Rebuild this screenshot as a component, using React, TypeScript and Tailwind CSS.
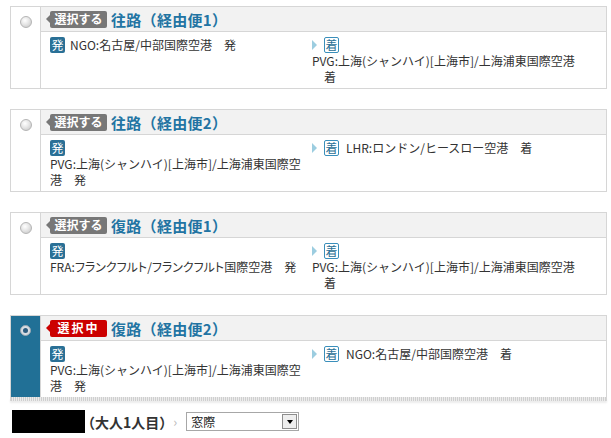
import React from "react";

type Card = {
  dir: string;
  selected?: boolean;
  left: React.ReactNode;
  right: React.ReactNode;
};

function Dep() {
  return (
    <span className="inline-flex items-center justify-center w-[15px] h-[16px] bg-[#2a7096] text-white text-[12px] leading-none rounded-[2px] align-middle">
      発
    </span>
  );
}

function Arr() {
  return (
    <span className="inline-flex items-center justify-center w-[15px] h-[16px] border border-[#3a8fbb] bg-white text-[#2a7096] text-[12px] leading-none rounded-[2px] align-middle">
      着
    </span>
  );
}

function Tri() {
  return (
    <span className="inline-block w-0 h-0 border-y-[5px] border-y-transparent border-l-[5px] border-l-[#9ccde0] align-middle" />
  );
}

function Radio({ on }: { on?: boolean }) {
  if (on) {
    return (
      <span className="flex items-center justify-center w-[11px] h-[11px] rounded-full bg-[#d8dde2] border border-[#9aa7b2]">
        <span className="w-[5px] h-[5px] rounded-full bg-[#2d5d80]" />
      </span>
    );
  }
  return (
    <span className="block w-[12px] h-[12px] rounded-full border border-[#b5b5b5] bg-[radial-gradient(circle_at_40%_35%,#ffffff_0%,#e6e6e6_45%,#c2c2c2_100%)]" />
  );
}

function CardView({ c }: { c: Card }) {
  return (
    <div className="ml-[10px] w-[597px]">
      <div
        className={
          "flex border border-[#d6d6d6] " + (c.selected ? "border-b-0" : "")
        }
      >
        <div
          className={
            "w-[30px] shrink-0 flex justify-center pt-[9px] border-r border-[#d6d6d6] " +
            (c.selected ? "bg-[#217096]" : "bg-white")
          }
        >
          <Radio on={c.selected} />
        </div>
        <div className="flex-1">
          <div className="h-[25px] bg-[#f2f2f2] border-b border-[#d6d6d6] flex items-center pl-[5px]">
            <span className="relative flex items-center">
              <span
                className={
                  "w-0 h-0 border-y-[4px] border-y-transparent border-r-[4px] " +
                  (c.selected ? "border-r-[#cc0000]" : "border-r-[#777777]")
                }
              />
              {c.selected ? (
                <span className="w-[57px] h-[17px] flex items-center justify-center bg-[#cc0000] text-white text-[12px] font-bold leading-none rounded-[2px] tracking-[2px]">
                  選択中
                </span>
              ) : (
                <span className="w-[57px] h-[17px] flex items-center justify-center bg-[#777777] text-white text-[12px] font-bold leading-none rounded-[2px]">
                  選択する
                </span>
              )}
            </span>
            <span className="ml-[4px] text-[15px] font-bold text-[#2274a3] leading-none tracking-[0.3px]">
              {c.dir}
            </span>
          </div>
          <div className="grid grid-cols-[271px_1fr] pt-[5px] pb-[3px] text-[12px] leading-[16px] text-[#333333]">
            <div className="pl-[9px] whitespace-nowrap overflow-hidden">{c.left}</div>
            <div className="whitespace-nowrap">{c.right}</div>
          </div>
        </div>
      </div>
      {c.selected && (
        <div className="h-[4px] border-x border-[#d6d6d6] bg-[repeating-linear-gradient(90deg,#cfcfcf_0_1px,#ececec_1px_2px)] shadow-[0_2px_2px_rgba(0,0,0,0.08)]" />
      )}
    </div>
  );
}

const PVG = "PVG:上海(シャンハイ)[上海市]/上海浦東国際空港";

export default function App() {
  const cards: Card[] = [
    {
      dir: "往路（経由便1）",
      left: (
        <div className="flex items-center gap-[5px]">
          <Dep />
          <span>NGO:名古屋/中部国際空港　発</span>
        </div>
      ),
      right: (
        <div>
          <div className="flex items-center gap-[7px] h-[16px]">
            <Tri />
            <Arr />
          </div>
          <div>{PVG}</div>
          <div>　着</div>
        </div>
      ),
    },
    {
      dir: "往路（経由便2）",
      left: (
        <div>
          <div className="flex items-center h-[16px]">
            <Dep />
          </div>
          <div>PVG:上海(シャンハイ)[上海市]/上海浦東国際空</div>
          <div>港　発</div>
        </div>
      ),
      right: (
        <div className="flex items-center gap-[7px] h-[16px]">
          <Tri />
          <Arr />
          <span>LHR:ロンドン/ヒースロー空港　着</span>
        </div>
      ),
    },
    {
      dir: "復路（経由便1）",
      left: (
        <div>
          <div className="flex items-center h-[16px]">
            <Dep />
          </div>
          <div>
            FRA:<span className="[font-feature-settings:'palt']">フランクフルト/フランクフルト</span>国際空港　発
          </div>
        </div>
      ),
      right: (
        <div>
          <div className="flex items-center gap-[7px] h-[16px]">
            <Tri />
            <Arr />
          </div>
          <div>{PVG}</div>
          <div>　着</div>
        </div>
      ),
    },
    {
      dir: "復路（経由便2）",
      selected: true,
      left: (
        <div>
          <div className="flex items-center h-[16px]">
            <Dep />
          </div>
          <div>PVG:上海(シャンハイ)[上海市]/上海浦東国際空</div>
          <div>港　発</div>
        </div>
      ),
      right: (
        <div className="flex items-center gap-[7px] h-[16px]">
          <Tri />
          <Arr />
          <span>NGO:名古屋/中部国際空港　着</span>
        </div>
      ),
    },
  ];

  return (
    <div className="w-[611px] h-[438px] bg-white overflow-hidden font-['Noto_Sans_CJK_JP',sans-serif] pt-[6px]">
      <div className="flex flex-col gap-[20px]">
        {cards.map((c, i) => (
          <CardView key={i} c={c} />
        ))}
      </div>
      <div className="flex items-center ml-[12px] mt-[9px]">
        <div className="w-[73px] h-[23px] bg-black" />
        <span className="ml-[-4px] text-[14px] font-bold text-[#333333] leading-none">
          （大人1人目）
        </span>
        <span className="ml-[0px] text-[13px] text-[#bbbbbb] leading-none">›</span>
        <div className="ml-[9px] w-[113px] h-[19px] border border-[#a7a7a7] bg-white flex items-center">
          <span className="flex-1 pl-[4px] text-[12px] text-[#222222] leading-none">窓際</span>
          <span className="w-[15px] h-[15px] mr-[1px] border border-[#8d8d8d] bg-[#eeeeee] flex items-center justify-center">
            <span className="w-0 h-0 border-x-[3px] border-x-transparent border-t-[4px] border-t-black" />
          </span>
        </div>
      </div>
    </div>
  );
}
